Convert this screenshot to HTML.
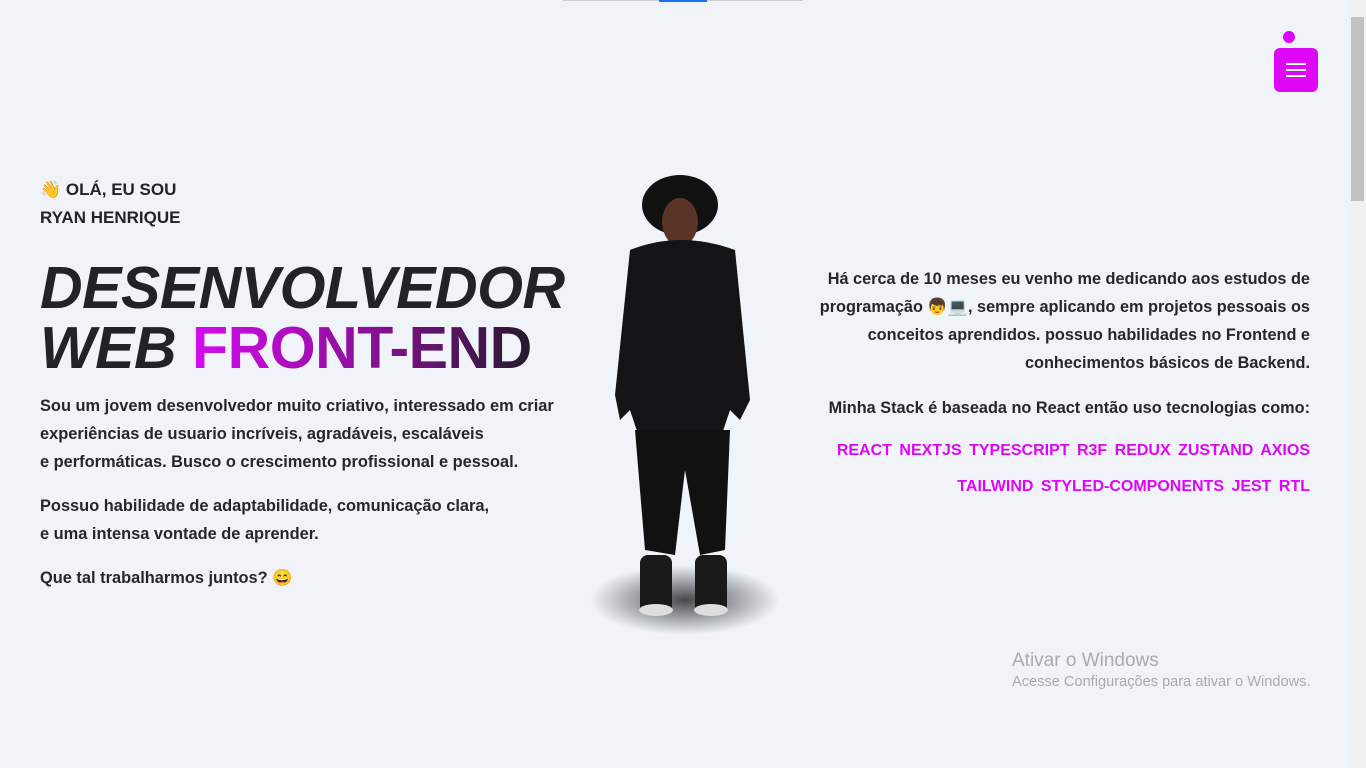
<!DOCTYPE html>
<html><head><meta charset="utf-8"><style>
*{margin:0;padding:0;box-sizing:border-box}
body{width:1366px;height:768px;overflow:hidden;background:#f0f4f9;font-family:"Liberation Sans",sans-serif;color:#222326;position:relative}
.sb{position:absolute;right:0;top:0;width:17px;height:768px;background:#f1f1f1}
.sb div{position:absolute;left:2px;top:17px;width:13px;height:184px;background:#c1c1c1}
.topbar{position:absolute;left:563px;top:0;width:240px;height:1px;background:#ccc}
.topbar i{position:absolute;left:96px;width:48px;height:2px;background:#1a73e8}
.dot{position:absolute;left:1283px;top:31px;width:12px;height:12px;border-radius:50%;background:#dd06f5}
.menu{position:absolute;left:1274px;top:48px;width:44px;height:44px;border-radius:6px;background:#dd06f5}
.menu span{position:absolute;left:12px;width:20px;height:2px;background:#fff}
.hi{position:absolute;left:40px;top:176px;font-weight:700;font-size:17px;line-height:28px}
h1{position:absolute;left:40px;top:258px;font-size:59px;font-weight:700;font-style:italic;line-height:60px;letter-spacing:-0.5px}
.g{font-style:normal;background:linear-gradient(90deg,#d50bef,#8e0f9a 50%,#231a2a);-webkit-background-clip:text;color:transparent}
.p{position:absolute;left:40px;font-size:16.4px;font-weight:700;line-height:28px;color:#26272b}
.r{position:absolute;right:56px;text-align:right;font-size:16.3px;font-weight:700;line-height:28px;color:#26272b}
.st{position:absolute;right:56px;text-align:right;font-size:16px;font-weight:700;color:#dd06f5;line-height:36px;word-spacing:3px}
.win{position:absolute;left:1012px;top:650px;color:#a8abb0}
</style></head><body>
<div class="topbar"><i></i></div>
<div class="dot"></div>
<div class="menu"><span style="top:15px"></span><span style="top:21px"></span><span style="top:27px"></span></div>
<div class="hi">👋 OLÁ, EU SOU<br>RYAN HENRIQUE</div>
<h1>DESENVOLVEDOR<br>WEB <span class="g">FRONT-END</span></h1>
<div class="p" style="top:392px">Sou um jovem desenvolvedor muito criativo, interessado em criar<br>experiências de usuario incríveis, agradáveis, escaláveis<br>e performáticas. Busco o crescimento profissional e pessoal.</div>
<div class="p" style="top:492px">Possuo habilidade de adaptabilidade, comunicação clara,<br>e uma intensa vontade de aprender.</div>
<div class="p" style="top:564px">Que tal trabalharmos juntos? 😄</div>
<svg style="position:absolute;left:590px;top:170px" width="200" height="470">
<defs><radialGradient id="sh"><stop offset="0" stop-color="#000" stop-opacity=".7"/><stop offset="1" stop-color="#000" stop-opacity="0"/></radialGradient></defs>
<ellipse cx="95" cy="430" rx="95" ry="35" fill="url(#sh)"/>
<ellipse cx="90" cy="35" rx="38" ry="30" fill="#111"/>
<ellipse cx="90" cy="52" rx="18" ry="24" fill="#5a3426"/>
<path d="M40 80 Q90 60 145 80 L160 230 L150 250 L140 240 L130 270 L50 270 L40 240 L30 250 L25 225 Z" fill="#141416"/>
<path d="M45 260 L140 260 L135 380 L110 385 L95 300 L85 385 L55 380 Z" fill="#111"/>
<rect x="50" y="385" width="32" height="60" rx="8" fill="#1a1a1a"/>
<rect x="105" y="385" width="32" height="60" rx="8" fill="#1a1a1a"/>
<ellipse cx="66" cy="440" rx="17" ry="6" fill="#ddd"/><ellipse cx="121" cy="440" rx="17" ry="6" fill="#ddd"/>
</svg>
<div class="r" style="top:265px">Há cerca de 10 meses eu venho me dedicando aos estudos de<br>programação 👦💻, sempre aplicando em projetos pessoais os<br>conceitos aprendidos. possuo habilidades no Frontend e<br>conhecimentos básicos de Backend.</div>
<div class="r" style="top:394px">Minha Stack é baseada no React então uso tecnologias como:</div>
<div class="st" style="top:433px">REACT NEXTJS TYPESCRIPT R3F REDUX ZUSTAND AXIOS<br>TAILWIND STYLED-COMPONENTS JEST RTL</div>
<div class="win"><div style="font-size:19px">Ativar o Windows</div><div style="font-size:14.6px;margin-top:2px">Acesse Configurações para ativar o Windows.</div></div>
<div class="sb"><div></div></div>
</body></html>
